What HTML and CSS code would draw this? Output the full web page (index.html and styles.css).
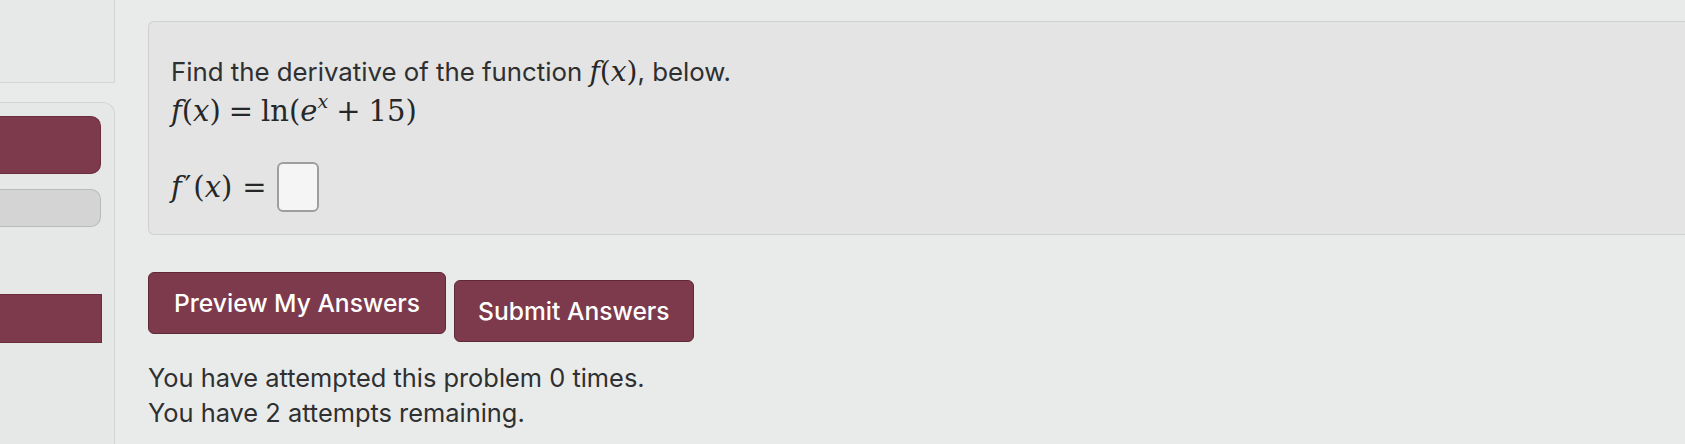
FILE: index.html
```html
<!DOCTYPE html>
<html lang="en">
<head>
  <meta charset="UTF-8">
  <meta name="viewport" content="width=device-width, initial-scale=1.0">
  <title>Problem</title>
  <link rel="stylesheet" href="styles.css">
</head>
<body>
  <div class="page">
    <aside class="sidebar">
      <div class="side-top"></div>
      <div class="side-card">
        <div class="side-btn maroon"></div>
        <div class="side-btn grey"></div>
        <div class="side-bar maroon"></div>
      </div>
    </aside>

    <main class="main">
      <div class="problem">
        <p class="prompt">Find the derivative of the function <span class="math"><i>f</i>(<i>x</i>)</span>, below.</p>
        <p class="math line">
          <i>f</i>(<i>x</i>)<span class="op">=</span>ln(<i>e</i><sup><i>x</i></sup><span class="op">+</span>15)
        </p>
        <div class="answer">
          <span class="math"><i>f</i><span class="prime">&prime;</span>(<i>x</i>)<span class="op">=</span></span>
          <span class="answer-box"></span>
        </div>
      </div>

      <div class="buttons">
        <button class="btn btn-preview">Preview My Answers</button>
        <button class="btn btn-submit">Submit Answers</button>
      </div>

      <div class="attempts">
        <div>You have attempted this problem 0 times.</div>
        <div>You have 2 attempts remaining.</div>
      </div>
    </main>
  </div>
</body>
</html>
```

FILE: styles.css
```css
body {
  margin: 0;
  background: #e9ebea;
  font-family: Inter, "Liberation Sans", Arial, sans-serif;
  color: #2e2f30;
  overflow: hidden;
}

.page {
  display: flex;
  height: 444px;
}

/* left navigation column, mostly cropped */
.sidebar {
  width: 115px;
  flex-shrink: 0;
  display: flex;
  flex-direction: column;
}
.side-top {
  height: 82px;
  border-right: 1px solid #d3d5d4;
  border-bottom: 1px solid #d3d5d4;
  background: #e7e9e8;
}
.side-card {
  margin-top: 19px;
  flex: 1;
  border-top: 1px solid #d3d5d4;
  border-right: 1px solid #d3d5d4;
  border-top-right-radius: 12px;
  background: #e6e8e7;
  padding-top: 13px;
  display: flex;
  flex-direction: column;
}
.side-btn {
  width: 100px;
  border-radius: 0 10px 10px 0;
}
.side-btn.maroon {
  height: 56px;
  background: #7d3a4c;
  border: 1px solid #6a2e3e;
  border-left: none;
}
.side-btn.grey {
  margin-top: 15px;
  height: 36px;
  background: #d3d4d3;
  border: 1px solid #b9bbba;
  border-left: none;
}
.side-bar {
  margin-top: 67px;
  width: 101px;
  height: 47px;
}
.side-bar.maroon {
  background: #7d3a4c;
  border: 1px solid #6a2e3e;
  border-left: none;
}

.main {
  flex: 1;
  padding-left: 33px;
}

.problem {
  margin-top: 21px;
  height: 214px;
  box-sizing: border-box;
  background: #e3e4e3;
  border: 1px solid #cfd1d0;
  border-right: none;
  border-radius: 6px 0 0 6px;
  padding: 34px 0 0 22px;
}
.problem p {
  margin: 0;
}
.prompt {
  font-size: 25.8px;
  line-height: 32px;
}
.math {
  font-family: "DejaVu Serif", "Liberation Serif", serif;
  font-size: 29px;
  color: #262728;
}
.prompt .math {
  font-size: 28px;
}
.math i {
  font-style: italic;
}
.math sup {
  font-size: 19px;
  vertical-align: 13px;
  line-height: 0;
}
.op {
  margin: 0 8px;
}
.line {
  margin-top: 3px !important;
  line-height: 40px;
}
.answer {
  margin-top: 31px;
  display: flex;
  align-items: center;
}
.prime {
  margin: 0 2px 0 3px;
}
.answer .op {
  margin: 0 10px;
}
.answer-box {
  display: inline-block;
  width: 38px;
  height: 46px;
  background: #f4f5f4;
  border: 2px solid #9d9f9e;
  border-radius: 6px;
}

.buttons {
  display: flex;
  gap: 8px;
  margin-top: 37px;
}
.btn {
  height: 62px;
  padding: 0 25px;
  background: #7d3a4c;
  border: 1px solid #5e2a38;
  border-radius: 6px;
  color: #fff;
  font-family: Inter, "Liberation Sans", Arial, sans-serif;
  font-size: 24.6px;
  font-weight: 500;
}
.btn-submit {
  margin-top: 8px;
  padding: 0 23px;
}

.attempts {
  margin-top: 18px;
  font-size: 25.4px;
  line-height: 35px;
  color: #2f3031;
}
```
